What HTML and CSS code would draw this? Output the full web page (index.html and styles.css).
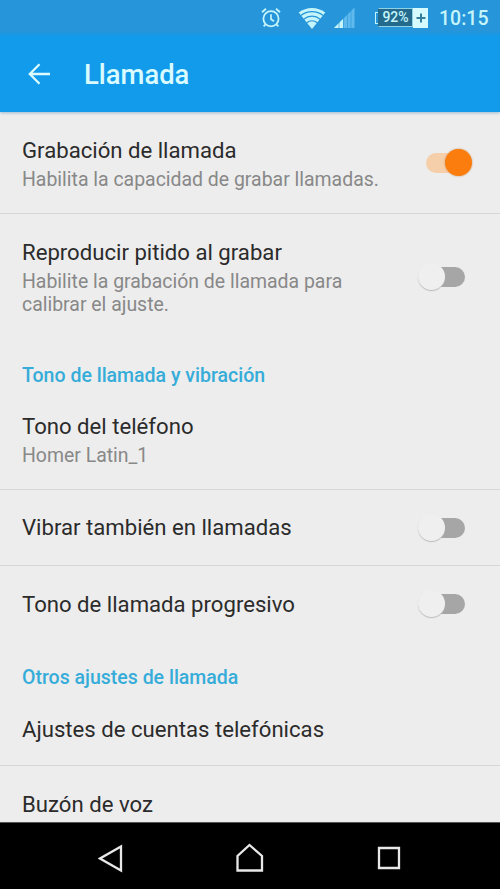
FILE: index.html
```html
<!DOCTYPE html>
<html lang="es">
<head>
<meta charset="utf-8">
<title>Llamada</title>
<link rel="stylesheet" href="styles.css">
</head>
<body>
<div class="screen">
  <header class="header">
    <div class="status">
      <svg class="alarm" width="22" height="22" viewBox="0 0 22 22" fill="none" stroke="currentColor"><circle cx="11" cy="11.8" r="7.6" stroke-width="1.8"/><path d="M11 7.3v4.9l3 2.1" stroke-width="1.7"/><path d="M2 5.2l4-3.4M20 5.2l-4-3.4M5.6 17.4l-2 2M16.4 17.4l2 2" stroke-width="1.8"/></svg>
      <svg class="wifi" width="28" height="22" viewBox="0 0 28 22"><path d="M.7 5.6C8.300-.6 19.700-.6 27.300 5.600L14 22z" fill="currentColor"/><path d="M2.800 8.500c6.400-5.300 16-5.300 22.400 0M5.800 12.200c4.800-4 11.600-4 16.400 0M8.800 15.800c3.100-2.600 7.300-2.600 10.400 0" fill="none" stroke="#2695d9" stroke-width="1.200"/></svg>
      <svg class="signal" width="21" height="21" viewBox="0 0 21 21"><path d="M0 21L20.500.5V21z" fill="#5fb9ec"/><path d="M0 21L9 12v9z" fill="currentColor"/><path d="M5 15v6M9.500 10v11M13.500 6v15M17 2v19" stroke="#2797dc" stroke-width=".6"/></svg>
      <div class="battery"><span class="tip"></span><span class="level">92%</span><span class="plus"><svg width="10" height="10" viewBox="0 0 10 10"><path d="M5 .5v9M.5 5h9" stroke="#347f9e" stroke-width="2"/></svg></span></div>
      <span class="clock">10:15</span>
    </div>
    <div class="toolbar">
      <svg width="24" height="22" viewBox="0 0 24 22" fill="none" stroke="#dcfbff" stroke-width="2.300"><path d="M23 11H3M12.500 1.300L2.800 11l9.700 9.700"/></svg>
      <h1>Llamada</h1>
    </div>
  </header>
  <main class="list">
    <div class="row first line"><div><div class="title">Grabación de llamada</div><div class="sub">Habilita la capacidad de grabar llamadas.</div></div><span class="switch on"></span></div>
    <div class="row second"><div><div class="title">Reproducir pitido al grabar</div><div class="sub">Habilite la grabación de llamada para<br>calibrar el ajuste.</div></div><span class="switch"></span></div>
    <h2>Tono de llamada y vibración</h2>
    <div class="row tone line"><div><div class="title">Tono del teléfono</div><div class="sub">Homer Latin_1</div></div></div>
    <div class="row single line"><div class="title">Vibrar también en llamadas</div><span class="switch"></span></div>
    <div class="row single"><div class="title">Tono de llamada progresivo</div><span class="switch"></span></div>
    <h2 class="other">Otros ajustes de llamada</h2>
    <div class="row accounts line"><div class="title">Ajustes de cuentas telefónicas</div></div>
    <div class="row single"><div class="title">Buzón de voz</div></div>
  </main>
  <nav class="nav">
    <svg width="26" height="30" viewBox="0 0 26 30"><path d="M23 3.500v24L2 15.500z"/></svg>
    <svg width="30" height="30" viewBox="0 0 30 30"><path d="M13.500 2l12.500 11v14.500H1.500V13z"/></svg>
    <svg width="24" height="24" viewBox="0 0 24 24"><path d="M2 2h20v20H2z"/></svg>
  </nav>
</div>
</body>
</html>
```
FILE: styles.css
```css
* { box-sizing: border-box; }
body { margin: 0; font-family: Roboto, sans-serif; }
.screen { width: 500px; height: 889px; display: flex; flex-direction: column; overflow: hidden; background: #ededed; }
.header { flex: none; height: 112px; background: #129beb; color: #c5f5fb; position: relative; z-index: 1; box-shadow: 0 1px 3px #9bbbd0; }
.status { height: 36px; background: linear-gradient(#2695d9 85%, #159ae7); display: flex; align-items: center; padding: 0 11px 1px 0; justify-content: flex-end; }
.wifi { margin-left: 16px; }
.signal { margin-left: 8px; }
.battery { display: flex; align-items: center; margin-left: 20px; height: 20px; }
.tip { width: 3px; height: 12px; border: 1px solid currentColor; border-right: 0; }
.level { width: 35px; height: 19px; background: #246a8c; border: 1px solid #8fd2e8; border-left-color: #246a8c; font-size: 14px; line-height: 17px; font-weight: 500; text-align: center; }
.plus { width: 15px; height: 20px; background: #d6fbff; display: flex; align-items: center; justify-content: center; }
.clock { width: 50px; margin: 2px 0 0 11px; font-size: 19.5px; line-height: 24px; font-weight: 500; }
.toolbar { height: 76px; display: flex; align-items: center; padding-left: 27px; }
h1 { margin: 2px 0 0 33px; font-size: 27.4px; line-height: 34px; font-weight: 500; color: #d9fbff; }
.list { flex: 1; min-height: 0; overflow: hidden; }
.row { display: flex; justify-content: space-between; padding: 0 35px 0 22px; align-items: center; }
.line { border-bottom: 1px solid #d7d7d7; }
.first { height: 102px; padding-top: 1px; }
.second { height: 132px; padding-bottom: 6px; }
.tone { height: 99px; padding-bottom: 1px; }
.single { height: 76px; }
.accounts { height: 73px; }
.title { font-size: 22.15px; line-height: 29px; color: #2b2b2b; white-space: nowrap; }
.sub { margin-top: 3px; font-size: 19.45px; line-height: 23px; color: #888; white-space: nowrap; }
h2 { margin: 0; padding: 16px 22px 0; font-size: 19.5px; line-height: 28px; height: 45px; font-weight: 500; color: #36acd9; white-space: nowrap; }
.other { height: 51px; padding-top: 22px; }
.switch { flex: none; position: relative; width: 46px; height: 30px; }
.switch::before { content: ""; position: absolute; left: 8px; top: 5px; width: 38px; height: 20px; border-radius: 10px; background: #a6a6a6; }
.switch::after { content: ""; position: absolute; left: -1px; top: 1px; width: 27px; height: 27px; border-radius: 50%; background: #efefef; box-shadow: 0 1px 1px #bbb; }
.on::before { left: 7px; background: #f5ceaa; }
.on::after { left: 26px; top: 1px; background: #fb7d0e; box-shadow: 0 0 2px #c98c58; }
.nav { flex: none; height: 67px; background: #000; border-top: 1px solid #555; display: flex; justify-content: space-between; align-items: center; padding: 3px 99px 0 98px; }
.nav path { fill: none; stroke: #e8e8e8; stroke-width: 2.300; }
```
